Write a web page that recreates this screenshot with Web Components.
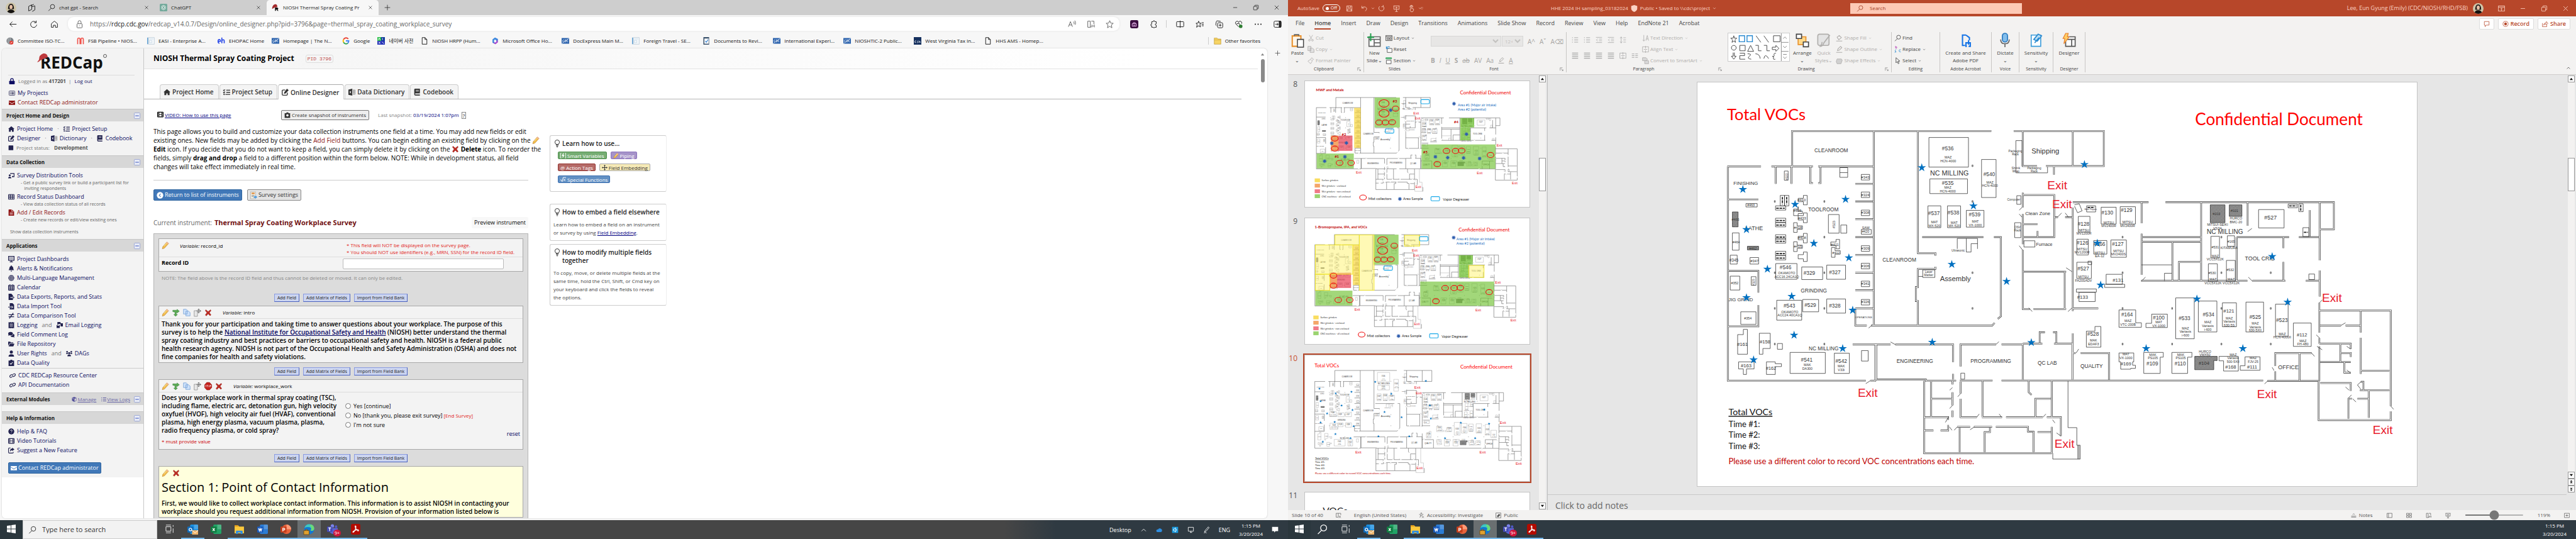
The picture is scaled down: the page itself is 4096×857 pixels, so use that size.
<!DOCTYPE html>
<html lang="en">
<head>
<meta charset="utf-8">
<title>NIOSH Thermal Spray Coating Project</title>
<style>
html,body{margin:0;height:100%}
body{font-family:"Open Sans","Noto Sans","Noto Sans CJK KR",sans-serif;font-size:9px;line-height:12px;color:#222;overflow:hidden}
</style>
</head>
<body>
<dual-desktop></dual-desktop>
<script>
const define=(tag,css,html,ready)=>{
  const t=document.createElement('template');
  customElements.define(tag,class extends HTMLElement{
    constructor(){super();this.attachShadow({mode:'open'});}
    connectedCallback(){
      if(this.shadowRoot.childNodes.length)return;
      t.innerHTML=`<style>*{box-sizing:border-box}:host{display:block;box-sizing:border-box}a{color:inherit;text-decoration:none}button,input,select{font:inherit;color:inherit;margin:0}${css}</style>`+(typeof html==='function'?html(this):html);
      this.shadowRoot.append(t.content.cloneNode(true));
      if(ready)ready(this);
    }
  });
};

/* ---------- icons: 16 x 16 grid, stroke by default ---------- */
const F='fill="currentColor" stroke="none"';
const app=(c,c2,l)=>`<rect x="4" y="1" width="12" height="14" rx="1.5" fill="${c2}" stroke="none"/><rect x="10" y="1" width="6" height="7" fill="#fff" opacity=".2" stroke="none"/><rect x="0" y="4" width="9" height="9" rx="1" fill="${c}" stroke="none"/>${l}`;
const stroke=(d)=>`<path d="${d}" stroke="#fff" stroke-width="1.2" fill="none"/>`;
const pageShape='<path d="M3 1h6l4 4v10H3zM9 1v4h4"/>';
const icons={
 close:'<path d="M3 3l10 10M13 3L3 13"/>',plus:'<path d="M8 1v14M1 8h14"/>',minus:'<path d="M3 8h10"/>',
 restore:'<rect x="2" y="5" width="9" height="9" rx="1"/><path d="M5 5V3q0-1 1-1h7q1 0 1 1v7q0 1-1 1h-2"/>',
 back:'<path d="M15 8H2M7 3L2 8l5 5"/>',refresh:'<path d="M13 5A6 6 0 1 0 14 9M13 1v4H9"/>',home:'<path d="M2 7l6-5 6 5v7h-4v-4H6v4H2z"/>',
 lockline:'<rect x="3" y="7" width="10" height="8" rx="1"/><path d="M5 7V4a3 3 0 0 1 6 0v3M8 10.500v1"/>',
 search:'<circle cx="10" cy="6" r="4.500"/><path d="M7 9.500L1.500 15"/>',
 cards:'<path d="M2 5l6-3v9l-6 3zM6 4l6-3M8 6l6-2v8l-5 3"/>',
 gpt:`<rect width="16" height="16" rx="2" fill="#74aa9c" stroke="none"/><path stroke="#fff" stroke-width="1" d="M8 3l4 2.500v5L8 13l-4-2.500v-5zM8 5.500l2 1.200v2.600L8 10.500 6 9.300V6.700z"/>`,
 redcap:`<path fill="#a32a2c" stroke="none" d="M1 9q1-7 6-8 5-1 5 6l-6 1-5 3z"/><path fill="#111" stroke="none" d="M7 15V8h4q3 0 3 2.200T12 12l2.500 3H12l-2-3H9v3z"/>`,
 az:'<path d="M1 13L5 3l4 10M2.500 9.500h5M11 3q2 2 1 5M13.500 1q2.500 4 1 8"/>',
 book:'<path d="M2 2h5v12H2zM9 2h5v6M7 14l2-1M10 9v5M12.500 10v3M15 9v5"/>',
 star:'<path d="M8 1l2 4.800 5 .4-3.800 3.300L12.400 15 8 12.200 3.600 15l1.200-5.500L1 6.200l5-.4z"/>',
 shopping:'<rect width="16" height="16" rx="3" fill="#3b0e3f" stroke="none"/><path stroke="#e9b8ee" d="M4 7h8v5H4zM6 7V5h4v2M6 10h4"/>',
 puzzle:'<path d="M4 3h3q0-2 1.500-2T10 3h3v4q-2 0-2 1.500T13 10v4h-3q0 1-1.500 1T7 14H4v-3q-2 0-2-1.500T4 8z"/>',
 split:'<rect x="1" y="3" width="14" height="10" rx="1"/><path d="M8 1v14"/>',
 starlist:'<path d="M6 2l1.500 4H11L8.500 8.500l1 5L6 11l-4 3 1.200-5L1 6h3.500zM12 5h4M12 8h4M12 11h4"/>',
 collect:'<rect x="5" y="5" width="10" height="10" rx="2"/><path d="M3 11q-2-1-1.500-3l1-5q.5-2 2.500-1.500l6 1M10 7.500v5M7.500 10h5"/>',
 heart:'<path d="M8 13L2 7q-1-4 3-5 2 0 3 2 1-2 3-2 4 1 3 5M4 7h3l1-2 2 4"/><circle cx="12" cy="12" r="3.500" fill="#2d7d32" stroke="none"/>',
 dots:`<g ${F}><circle cx="2.500" cy="8" r="1.300"/><circle cx="8" cy="8" r="1.300"/><circle cx="13.500" cy="8" r="1.300"/></g>`,
 panel:'<rect x="1" y="2" width="14" height="12" rx="2"/><path d="M3.500 8H9M7 5.500L9.500 8 7 10.500"/><path fill="currentColor" d="M11 2h3v12h-3z"/>',
 iso:'<circle cx="8" cy="8" r="7.500" fill="#7b8085" stroke="none"/><path d="M4 2v12M8 1v14" stroke="#fff" stroke-width=".8"/><circle cx="11" cy="11.500" r="4" fill="#e23b32" stroke="none"/><path d="M9 13l4-3" stroke="#fff"/>',
 pipeline:'<path d="M2 15V5q0-3 2.500-3T7 5v10M9 15V5q0-3 2.500-3T14 5v10" stroke="#f0524b" stroke-width="2.200"/>',
 doc:'<rect x="3" y="1" width="12" height="14" fill="#f4f8fb" stroke="#b7c8d4" stroke-width="1"/><path d="M1 1v14" stroke="#5a9bd0" stroke-width="2"/><path d="M5 4h8M5 7h5v5h-5z" stroke="#bcd" stroke-width=".8"/>',
 eh:'<path d="M1 9h5q0-4-2.500-4T1 9t3 4M9 1v12M9 7q5-3 5 1v5" stroke="#2747e8" stroke-width="2.200"/>',
 cdc:'<rect y="2" width="16" height="12" fill="#2b62ad" stroke="none"/><path stroke="#fff" stroke-width="1" d="M5 6Q2 5 2 8t3 2M7 5.500v5q3 0 3-2.500T7 5.500M14 6q-3-1-3 2t3 2M0 14L16 2" opacity=".85"/>',
 google:'<path d="M13 4A6 6 0 0 0 3 5" stroke="#ea4335" stroke-width="2.600"/><path d="M3 5a6 6 0 0 0 0 6" stroke="#fbbc05" stroke-width="2.600"/><path d="M3 11a6 6 0 0 0 9 2" stroke="#34a853" stroke-width="2.600"/><path d="M12 13q2-2 2-5H8" stroke="#4285f4" stroke-width="2.600"/>',
 naver:'<rect width="8" height="8" fill="#2fc14e" stroke="none"/><rect x="8" width="8" height="8" fill="#123c9c" stroke="none"/><rect y="8" width="16" height="8" fill="#2a36b8" stroke="none"/><path d="M2 6l2-4 2 4M11 6V2M3 10l3 4M6 10l-3 4M10 10l4 4" stroke="#fff"/>',
 page:pageShape,
 office:'<path d="M8 1l6 3v7l-5 4-6-3V5z" fill="#5b5fd0" stroke="none"/><path d="M8 1L3 5v7l3-1V7l4-2 4 2V4z" fill="#3c8fe0" stroke="none"/><path d="M8 5l3 2v3l-3 2-2-2V7z" fill="#f7f7f7" stroke="none"/><path d="M14 7v4l-5 4-3-2 5-3z" fill="#b64bd0" stroke="none"/>',
 check:'<rect x="2" width="12" height="16" fill="#39516b" stroke="none"/><rect x="4" y="3" width="9" height="11" fill="#fff" stroke="none"/><path d="M6 8l2 3 4-6" stroke="#2f7fd0" stroke-width="1.600"/>',
 gsa:'<rect width="16" height="16" fill="#16315f" stroke="none"/><path d="M5 8Q2 7 2 10t3 1M10 8q-3 0-1.500 2T7 12M11 12l1.500-4L14 12" stroke="#fff" stroke-width="1"/>',
 folder:'<path d="M1 2h6l2 2h6v11H1z" fill="#f6d465" stroke="#b58b1c" stroke-width=".8"/><path d="M1 6h14" stroke="#b58b1c" stroke-width=".6"/>',
 lock:`<rect x="1" y="7" width="14" height="9" rx="1.500" ${F}/><path d="M4.500 8V5a3.500 3.500 0 0 1 7 0v3" stroke-width="2"/>`,
 listbox:'<rect x="0.700" y="2.700" width="14.600" height="11" rx="1.500"/><path d="M3 6h2M3 8.300h2M3 10.500h2M6.500 6H13M6.500 8.300H13M6.500 10.500H13" stroke-width="1.400"/>',
 mail:`<path ${F} d="M0 3h16v2L8 10 0 5z"/><path ${F} d="M0 6.500l8 5 8-5V14H0z"/>`,
 house:`<path ${F} d="M8 1L0 8h2v7h4.500v-4h3v4H14V8h2z"/>`,
 tasks:'<path d="M0 3l1.500 1.500L4 2M0 8l1.500 1.500L4 7M7 3.500h9M7 8.300h9M5 13.300h11" stroke-width="2"/><circle cx="2" cy="13" r="1.200" fill="currentColor"/>',
 edit:`<path d="M8 3H3q-2 0-2 2v8q0 2 2 2h8q2 0 2-2V9" stroke-width="2"/><path ${F} d="M12 0l4 3.500L9 11l-4 1 1-4z"/>`,
 excelbw:`<path ${F} d="M0 2l9-2v16l-9-2z"/><path d="M10 3h5.500v10H10M10 6h5M10 9h5M12.500 3v10" stroke="#777" stroke-width="1"/><path d="M3 5.500l3 5M6 5.500l-3 5" stroke="#fff"/>`,
 codebook:`<path ${F} d="M3 0h11v11H4q-1 0-1 1.200T4 13.500h10V16H4q-3 0-3-3V2q0-2 2-2z"/><path d="M4.500 3.500h7M4.500 6h7" stroke="#fff" stroke-width="1"/>`,
 square:`<rect x="1" y="2" width="12" height="12" rx="1" ${F}/>`,
 teach:`<path d="M5 3h10v8h-5" stroke-width="1.800"/><circle cx="4" cy="7.500" r="2.500" ${F}/><path ${F} d="M0 15q0-4 4-4t4 4zM10 9h3v3h-3z"/>`,
 table:'<rect x="1" y="2" width="14" height="12" rx="1" stroke-width="1.800"/><path d="M1 6h14M1 10h14M5.500 2v12M10.500 2v12" stroke-width="1.700"/>',
 file:`<path ${F} d="M1 1q0-1 1-1h7l6 5v10q0 1-1 1H2q-1 0-1-1z"/><path d="M4 8h8M4 10.500h8M4 13h8M9 0v5h5" stroke="#fff" stroke-width="1"/>`,
 dash:'<rect x="1" y="1" width="14" height="10" stroke-width="2"/><path d="M3.500 4.500h9M3.500 7.500h9" stroke-width="1.600" stroke-dasharray="1.600 1"/><path d="M8 11v3M4 15h8" stroke-width="1.800"/>',
 bell:`<path ${F} d="M7 0h2v1.500q4 1 4 5.500 0 3 2 5H1q2-2 2-5 0-4.500 4-5.500zM6 13.500h4q-.5 2-2 2t-2-2z"/>`,
 globe:`<circle cx="8" cy="8" r="7.500" ${F}/><path d="M0 5.500h16M0 10.500h16M8 0v16M5 1q-2 7 0 14M11 1q2 7 0 14" stroke="#f3f3f3" stroke-width=".9"/>`,
 cal:`<rect x="1" y="2.500" width="14" height="12.500" rx="1" stroke-width="1.800"/><path d="M1 5.500h14M1 9h14M1 12h14M5.500 5v10M10.500 5v10M4.500 0v4M11.500 0v4" stroke-width="1.500"/>`,
 fileout:`<path ${F} d="M1 0h7l4 4v4H6v3h6v5H1z"/><path d="M7 9.500h8M12.500 7l2.700 2.500-2.700 2.500" stroke-width="1.500"/>`,
 filein:`<path ${F} d="M4 0h7l4 4v12H4v-4.500h5V14l3.500-4L9 6v2.500H4z"/><path d="M0 10h10" stroke-width="1.700"/>`,
 noteq:'<path d="M1 5.500h14M1 10.500h14M13 1L3 15" stroke-width="2"/>',
 receipt:`<path ${F} d="M1 0l2 1 2-1 3 1 3-1 2 1 2-1v16l-2-1-2 1-3-1-3 1-2-1-2 1z"/><path d="M4 5h8M4 8h8M4 11h8" stroke="#f3f3f3" stroke-width="1.200"/>`,
 mails:`<path ${F} d="M2 0h8v3h6v8h-6V5H4v2H2z"/><path ${F} d="M0 7l4 3 4-3v8H0z"/>`,
 comments:`<ellipse cx="6" cy="5.500" rx="6" ry="4.500" ${F}/><path ${F} d="M1 8l-1 3 4-2zM12.500 6q4 1 3.500 4.500-.3 1.500-1 2.300l1 2.700-3.500-1.500Q8 15 6 11.500 12 11 12.500 6z"/>`,
 folderopen:`<path ${F} d="M0 2h5l2 2h6v2H4l-4 6zM4.500 7H16l-3 7H1z"/>`,
 user:`<circle cx="8" cy="4.200" r="4" ${F}/><path ${F} d="M1 16q0-6 7-6t7 6z"/>`,
 users:`<circle cx="8" cy="7" r="2.600" ${F}/><circle cx="2.700" cy="3.500" r="2" ${F}/><circle cx="13.300" cy="3.500" r="2" ${F}/><path ${F} d="M3.500 15q0-4.500 4.500-4.500t4.500 4.500zM0 9q0-3 3-3l1.500.5V9zM16 9q0-3-3-3l-1.500.5V9z"/>`,
 clipcheck:`<path ${F} d="M1 2h4q0-2 3-2t3 2h4v14H1z"/><path d="M4.500 9l2.500 2.500L11.500 6" stroke="#f3f3f3" stroke-width="1.800"/>`,
 link:'<path d="M7 11.500q-4 3-6 0-1-3 3-5 4-2 5 1.500M9 5q4-3 6 0 1 3-3 5-4 2-5-1.500" stroke-width="1.700"/>',
 cube:`<path ${F} d="M8 0l7 3v9l-7 4-7-4V3z"/><path d="M2 4l6 3 6-3" stroke="#d7d7d7"/><path d="M9 8v6l5-3V5z" fill="#d7d7d7" stroke="none"/>`,
 list:'<path d="M0 3h2M0 8h2M0 13h2M5 3h11M5 8h11M5 13h11" stroke-width="1.700"/>',
 help:`<circle cx="8" cy="8" r="7.500" ${F}/><path d="M5.800 6q.2-2 2.200-2t2.200 1.800Q10.200 7.500 8 8.500M8 10.800V12" stroke="#f3f3f3" stroke-width="1.600"/>`,
 film:'<rect x="1" y="2" width="14" height="12" rx="1" stroke-width="2"/><path d="M4.500 2v12M11.500 2v12M4.500 8h7M1 6h3M1 10h3M12 6h3M12 10h3" stroke-width="1.500"/>',
 share:`<path d="M6 2H3Q1 2 1 4v9q0 2 2 2h8q2 0 2-2v-1" stroke-width="1.800"/><path ${F} d="M10 1l6 4.500-6 4.500V7.500q-4 0-5 4-1-8 5-8z"/>`,
 camera:`<path ${F} d="M1 3h4l1-2h4l1 2h4v12H1z"/><circle cx="8" cy="8.500" r="3" fill="#eee" stroke="none"/>`,
 pencil:'<path d="M11 1l4 3L6 14l-4.500 1.500L2.500 11z" fill="#f2bf4f" stroke="#bd7b22" stroke-width=".8"/><path d="M11 1l4 3-1.500 1.600-4-3z" fill="#f0b3a0" stroke="none"/><path d="M5 9.500l6-6.500" stroke="#fce9a4" stroke-width="1.300"/>',
 del:'<path d="M3 2l5 4 5-4 1 2-3.500 4 3.500 5-2 1.500L8 10.500 4 15l-2-2 3.500-5L2 4z" fill="#bf2c24" stroke="#8e1c16" stroke-width=".7"/>',
 branch:'<path d="M1 3h9V1l5 4-5 4V6.500L8.500 8v4H11l-4 4-4-4h2.500V7L1 6z" fill="#5aaa53" stroke="#35803a" stroke-width=".7"/>',
 copy:'<path d="M1 1h6l2 2v8H1zM6 5h6l3 3v7H6z" fill="#cfe2fa" stroke="#6d9bd4" stroke-width="1"/>',
 move:'<path d="M1 4h7v12H1z" fill="#e8e8e8" stroke="#999"/><path d="M10.500 0v9M6 4.500h9M10.500 0l-2 2M10.500 0l2 2M15 4.500l-2-2M15 4.500l-2 2M10.500 9l-2-2M10.500 9l2-2" stroke="#555" stroke-width="1.100"/>',
 stop:'<path d="M5 0h6l4.500 5v6L11 16H5L.5 11V5z" fill="#c4211c" stroke="#7e1512" stroke-width=".7"/><path d="M4 6q-2 0-1 1.500T2.500 10M5 6h2.500M6.200 6v4M9.500 6v4M12 10V6h1.500v2H12" stroke="#fff" stroke-width=".9"/>',
 circleleft:`<circle cx="8" cy="8" r="7.500" ${F}/><path d="M9.500 4.500L6 8l3.500 3.500" stroke="#4178b8" stroke-width="1.500"/>`,
 survey:'<rect x="1" width="11" height="16" fill="#f4efe2" stroke="#999" stroke-width=".8"/><rect x="3" y="2" width="7" height="3" fill="#e0862f" stroke="none"/><path d="M3 8h7M3 11h5" stroke="#777"/><path d="M8 10h4V8l4 4-4 4v-2H8z" fill="#4f9be0" stroke="none"/>',
 bulb:'<circle cx="8" cy="5.500" r="4.800"/><path d="M6 10v2h4v-2M6 14h4M7 16h2"/>',
 bolt:`<path ${F} d="M8 1L4 9h3l-1 6 6-9H8l2-5z"/><path d="M2.500 1H.8v14h1.700M13.500 1h1.700v14h-1.700" stroke-width="1.500"/>`,
 arrows:'<path d="M8 1v14M1 8h14M8 1L6 3M8 1l2 2M8 15l-2-2M8 15l2-2M1 8l2-2M1 8l2 2M15 8l-2-2M15 8l-2 2" stroke-width="1.700"/>',
 root:'<path d="M0 9h2.500L5 14 8 2h8M9 6l5 6M14 6l-5 6" stroke-width="1.700"/>',
 minusbox:'<rect x="0.700" y="0.700" width="14.600" height="14.600" rx="2" fill="#e9ecf6" stroke="#92a0d4" stroke-width="1.400"/><path d="M3.500 8h9" stroke="#5c72c8" stroke-width="2"/>',
 save:'<path d="M2 2h12v12H2zM5 2v4h6V2M4 14V9h8v5"/>',undo:'<path d="M2 2v5h5M2 7q4-5 9-2t-1 9"/>',redo:'<path d="M12 3a6 6 0 1 1-8 0M12 0v4h-4"/>',
 present:'<path d="M1 2h14M2 2v8h12V2M8 10v5M5 15h6M7 4.500l3 1.700-3 1.700z"/>',touch:'<path d="M6 10V3q0-1.500 1.300-1.500T8.600 3v5l4 1v3l-2 3.500H6.500L4 11zM4 5q0-4 3.500-4.500T11 5"/>',
 caret:'<path d="M3 6l5 5 5-5" stroke-width="1.800"/>',qat:'<path d="M3 5h10M4 9l4 4 4-4"/>',
 shield:`<path ${F} d="M8 0l7 2v6q0 5-7 8-7-3-7-8V2z"/>`,
 ribbonup:'<rect x="1" y="2" width="14" height="12"/><path d="M1 5h14M8 13V7.500M5.500 9.500L8 7l2.500 2.500"/>',
 chat:'<path d="M2 2h12v9H7l-3 4v-4H2z"/>',rec:`<circle cx="8" cy="8" r="6.500"/><circle cx="8" cy="8" r="3.500" ${F}/>`,shareout:'<path d="M1 6v9h11v-4M4 11q1-6 7-6V2l4 4.500-4 4V8Q7 8 4 11z"/>',
 paste:'<path d="M2 3h10v12H2z" fill="#fff7ea" stroke="#e8912d" stroke-width="1.500"/><path d="M4.500 3V1.500h5V3" stroke="#666"/><path d="M8 7h7v9H8z" fill="#fff" stroke="#444" stroke-width="1.100"/>',
 cut:'<path d="M4 1l6 10M12 1L6 11"/><circle cx="4.500" cy="13" r="2"/><circle cx="11.500" cy="13" r="2"/>',
 copyg:'<path d="M1 1h7v10H1zM6 5h5l4 3v7H6z" fill="#e2e2e2"/>',brush:'<path d="M10 1l4 4-4 3-3-3zM7 5L1 9l6 6 4-6"/>',
 newslide:'<path d="M2 4h13v11H2zM2 7h13M8 7v8M8 11h7" stroke="#666" fill="#fff"/><path d="M4 0v9M0 4.500h8" stroke="#1f9e4a" stroke-width="1.400"/>',
 layout:'<rect x="1" y="2" width="14" height="12"/><path d="M1 5h14M4 7.500h3.500v4H4zM9.500 7.500H13v4H9.500z"/>',
 reset:'<path d="M4 6h11v9H4z" fill="#fff"/><path d="M2 1v5h5M2 5q4-5 8-2" stroke="#2a8ad0" stroke-width="1.500"/>',
 section:'<path d="M2 7h11v8H2z" fill="#fff"/><path d="M1 1h13v3H1z" fill="#6cc48a" stroke="#2f9e58"/>',
 lines:'<path d="M1 2h14M1 6h14M1 10h14M1 14h14" stroke-width="1.500"/>',bullets:'<path d="M1 3h2M1 8h2M1 13h2M6 3h9M6 8h9M6 13h9" stroke-width="1.500"/>',
 indent:'<path d="M1 2h14M8 6h7M8 10h7M1 14h14M5 5L2 8l3 3"/>',spacing:'<path d="M4 1v14M1.500 4L4 1l2.500 3M1.500 12L4 15l2.500-3M9 3h6M9 8h6M9 13h6"/>',
 cols:'<path d="M1 4h6M1 8h6M1 12h6M9 4h6M9 8h6M9 12h6" stroke-width="1.500"/>',
 textdir:'<path d="M4 1v14M1.500 12L4 15l2.500-3M9 14l3-12 3 12M10 10h4"/>',align:'<path d="M1 2h14v12H1zM8 0v6M8 16v-6M4 8h8"/>',smart:'<path d="M1 1h8l4 4-4 3H1zM6 8h9v7H6z" fill="#d8d8d8"/>',
 arrange:'<path d="M3 4h9v9H3z" fill="#ffd98a" stroke="#e8912d"/><path d="M1 1h6v5H1zM9 10h6v5.500H9z" fill="#fff" stroke="#444"/>',
 quick:'<rect x="1" y="1" width="13" height="13" rx="2" fill="#e4e4e4"/><path d="M15 2L8 11q-1 4-4 4 2-2 2-5"/>',
 bucket:'<path d="M3 6l5-4 5 5-6 5zM1 15h14" stroke-width="1.600"/>',pen:'<path d="M4 11l1-4 6-6 3 3-6 6zM1 15h14" stroke-width="1.600"/>',fx:'<path d="M3 4h10l2 3-3 8H3L1 10z" fill="#d0d0d0"/>',
 replace:'<path d="M3 5V0M3 3q4-2 3 1t-3 1" stroke="#b43fb4"/><path d="M15 9q-4-1-4 2t4 3M4 8q-4 3 0 6M2 12l2 2-3 1" stroke="#2a8ad0"/>',cursor:'<path d="M4 1v12l3-3 2 5 2-1-2-5h4z"/>',
 adobe:'<path d="M8 2H4v12h3M8 2l4 3v3" stroke="#1473e6" stroke-width="1.500"/><path d="M9 15h-1v-4h5v4h-2M11 8v5" stroke="#1473e6" stroke-width="1.500"/>',
 mic:'<rect x="5" width="6" height="10" rx="3" fill="#83beec" stroke="#2a7ac0"/><path d="M3 7q0 5 5 5t5-5M8 12v4" stroke="#666"/>',
 sens:'<path d="M2 2h11v13H2z" fill="#fff" stroke="#3d9ddb"/><path d="M5 7l5-6 4 2-5 6zM6 11l5-6" fill="#b9def5" stroke="#2a8ad0"/>',
 designer:'<path d="M4 4h11v11H4zM4 7h11M11 7v8" fill="#fff" stroke="#555"/><path d="M4 0h3L6 4h2L2 12l1-6H1z" fill="#ffcf66" stroke="#e8812d" stroke-width=".9"/>',
 launcher:'<path d="M2 14V2h10M6 6l8 8M14 9v5H9"/>',
 taskview:'<path d="M1 4h9v8H1zM1 1h9M1 15h9M14 1v3M14 7v8" stroke-width="1"/>',
 start:`<path ${F} d="M0 2.300l7-.9v6.100H0zM8 1.200L16 0v7.500H8zM0 8.500h7v6.100l-7-.9zM8 8.500h8V16l-8-1.200z"/>`,
 outlook:app('#0f6cbd','#1a8fe0',`<circle cx="4.500" cy="8.500" r="2" stroke="#fff" stroke-width="1.200"/><path d="M7 9.500h9V16H7z" fill="#efb56c" stroke="none"/><path d="M7 9.500l4.500 4L16 9.500" stroke="#fff" stroke-width=".9"/>`),
 excel:app('#107c41','#21a366',stroke('M3 6.500l3 4M6 6.500l-3 4')),
 explorer:'<path d="M1 2h5l2 2h7v10H1z" fill="#fbc93d" stroke="none"/><path d="M1 2h5l1 2H1z" fill="#e39a17" stroke="none"/><path d="M3 15v-4q0-1 1-1h8q1 0 1 1v4h-3v-2H6v2z" fill="#2f8ee0" stroke="none"/>',
 word:app('#185abd','#2b7cd3',stroke('M2 6.500l1.300 4L4.500 7l1.200 3.500L7 6.500')),
 ppt:'<circle cx="9" cy="8" r="7" fill="#e8633c" stroke="none"/><path d="M9 1a7 7 0 0 1 7 7H9z" fill="#ff9b77" stroke="none"/><rect y="4" width="9" height="9" rx="1" fill="#c43e1c" stroke="none"/>'+stroke('M3.500 11V6.500h1.500q1.500 0 1.500 1.200T5 9H3.500'),
 edge:'<circle cx="8" cy="8" r="7.500" fill="#1478cf" stroke="none"/><path d="M1 6Q3 0 9 .5 16 1 15.500 8q-1 3-5 2 2-4-2-5T1 6z" fill="#3fc8c0" stroke="none"/><path d="M10 .7Q16 2 15.500 8q-1 3-5 2 2-5-1-7z" fill="#6bdc76" stroke="none"/><path d="M0 10h8v6H0zM2.500 10V8.500h3V10" fill="#e0a132" stroke="#6e4a10" stroke-width=".8"/>',
 teams:'<circle cx="8" cy="3" r="2.500" fill="#7b83eb" stroke="none"/><circle cx="13.500" cy="4" r="1.800" fill="#5059c9" stroke="none"/><path d="M4 6h12v5q-2 4-6 4T4 12z" fill="#5b62d0" stroke="none"/><rect y="4" width="8" height="8" rx="1" fill="#444bb5" stroke="none"/>'+stroke('M2 6h4M4 6v4.500'),
 acrobat:'<rect x="1" width="14" height="16" rx="2.500" fill="#b30b00" stroke="none"/><path d="M7.500 3q2 0 0 5T4 12.500q-1-1 3.500-3T12.500 10q-1 1.500-3.500-2T7.500 3z" stroke="#fff" stroke-width="1.100"/>',
 up:'<path d="M3 11l5-5 5 5"/>',cloud:'<path d="M3 13Q0 12 1 9t4-2q2-4 6-2t3 5q0 3-3 3z" fill="#2f8ee0" stroke="none"/>',vol:'<rect x="1" y="1" width="14" height="14" fill="#1a9be0" stroke="none"/><path d="M4 6h2l3-3v10L6 10H4zM11 6q1 2 0 4" stroke="#fff"/>',
 monitor:'<path d="M2 2h12v9H2zM6 14h5M8 11v3"/>',penw:'<path d="M12 1L5 9l-2 4 4-2 7-8zM2 15q3-2 6 0"/>',
 notify:`<path ${F} d="M1 1h14v10H9l-3 3v-3H1z"/>`,
 tri:`<path ${F} d="M8 4l6 8H2z"/>`,trid:`<path ${F} d="M8 12L2 4h12z"/>`,
 spell:'<path d="M1 2h6v11H1zM7 2h7v5M9 9l5 6M14 9l-5 6"/>',access:'<circle cx="7" cy="2.500" r="1.700"/><path d="M1 5l4 1v3l-2 5M13 5L9 6v3M5 9h3M9 10l5 5M14 10l-5 5"/>',label:'<path d="M1 1h14v14H1z"/><path d="M4 10l6-6 3 3-6 6z" fill="currentColor"/>',
 notes:'<path d="M1 10h14M1 13h14M5 6l3-3 3 3"/>',normal:'<path d="M1 2h14v12H1zM5 2v12"/>',sorter:'<path d="M1 2h6v5H1zM9 2h6v5H9zM1 9h6v5H1zM9 9h6v5H9z"/>',fit:'<path d="M1 2h14v12H1zM4 8h8M8 5v6"/>',
 prev:`<path ${F} d="M8 1l5 5H3zM8 7l5 5H3z"/>`,next:`<path ${F} d="M8 15l5-5H3zM8 9l5-5H3z"/>`
};
define('ui-icon',':host{display:inline-block;flex:none;width:var(--size,10px);height:var(--size,10px)}svg{display:block;width:100%;height:100%;overflow:visible}',
 el=>`<svg viewBox="0 0 16 16" fill="none" stroke="currentColor" stroke-width="1.200" aria-hidden="true">${icons[el.getAttribute('name')]||''}</svg>`);
const I=(n,c='')=>`<ui-icon name="${n}" class="${c}"></ui-icon>`;

define('user-photo',':host{width:17px;height:17px;flex:none}svg{display:block}','<svg viewBox="0 0 18 18" width="17" height="17"><defs><clipPath id="c"><circle cx="9" cy="9" r="9"/></clipPath></defs><g clip-path="url(#c)"><rect width="18" height="18" fill="#cfc5a8"/><path d="M4 11Q4 2 9 2t5 9z" fill="#1d1716"/><ellipse cx="9" cy="7.500" rx="2.600" ry="3.400" fill="#e7bfa4"/><path d="M2 18q1-6 7-6t7 6z" fill="#14110f"/></g></svg>');

/* ---------- Edge ---------- */
define('browser-tabs',`:host{display:flex;height:24px;align-items:stretch;background:#cecece;color:#222;font-size:8px}
.lead{width:68px;display:flex;align-items:center;gap:18px;padding-left:9px;--size:13px}
.tab{display:flex;align-items:center;gap:6px;width:178px;padding:0 8px;position:relative;--size:12px;white-space:nowrap;border-right:1px solid transparent}
.tab:nth-child(2){border-color:#777;width:176px}.tab span{flex:1;overflow:hidden}
.tab .x{--size:8px;color:#222}.active{background:#f7f7f7;border-radius:5px 5px 0 0}
.new{margin-left:9px}.ctl{margin-left:auto;display:flex;gap:23px;padding-right:13px}button{border:0;background:none;padding:0;display:flex;align-items:center;--size:10px}`,
`<div class="lead"><user-photo></user-photo>${I('cards')}</div>
<div class="tab">${I('search')}<span>chat gpt - Search</span>${I('close','x')}</div>
<div class="tab">${I('gpt')}<span>ChatGPT</span>${I('close','x')}</div>
<div class="tab active">${I('redcap')}<span>NIOSH Thermal Spray Coating Pr</span>${I('close','x')}</div>
<button class="new" aria-label="New tab">${I('plus')}</button>
<div class="ctl"><button aria-label="Minimize">${I('minus')}</button><button aria-label="Restore">${I('restore')}</button><button aria-label="Close">${I('close')}</button></div>`);

define('browser-toolbar',`:host{display:flex;align-items:center;height:28px;background:#f7f7f7;--size:13px;color:#222;padding-left:14px}
button{border:0;background:none;padding:0;display:flex}
.nav{display:flex;gap:20px;width:94px}
.url{flex:1;display:flex;align-items:center;height:22px;background:#fff;border-radius:9px;padding:0 9px 0 12px;gap:10px;box-shadow:0 0 3px #ddd;color:#666}
.url p{margin:0;flex:1;font-size:10px;white-space:nowrap}.url b{font-weight:400;color:#111}.url .g{display:flex;gap:17px}
.ext{display:flex;gap:18px;padding:0 10px 0 17px;align-items:center}.ext i{width:1px;height:12px;background:#ccc;margin:0 -3px 0 -5px}`,
`<div class="nav"><button aria-label="Back">${I('back')}</button><button aria-label="Refresh">${I('refresh')}</button><button aria-label="Home">${I('home')}</button></div>
<div class="url">${I('lockline')}<p>https://<b>rdcp.cdc.gov</b>/redcap_v14.0.7/Design/online_designer.php?pid=3796&amp;page=thermal_spray_coating_workplace_survey</p><div class="g">${I('az')}${I('book')}${I('star')}</div></div>
<div class="ext">${I('shopping')}${I('puzzle')}<i></i>${I('split')}${I('starlist')}${I('collect')}${I('heart')}${I('dots')}${I('panel')}</div>`);

const favs=[['iso','Committee ISO-TC...'],['pipeline','FSB Pipeline • NIOS...'],['doc','EASI - Enterprise A...'],['eh','EHOPAC Home',1],['cdc','Homepage | The N...'],['google','Google',1],['naver','네이버 사전',1],['page','NIOSH HRPP (Hum...'],['office','Microsoft Office Ho...'],['cdc','DocExpress Main M...'],['doc','Foreign Travel - SE...'],['check','Documents to Revi...'],['cdc','International Experi...'],['cdc','NIOSHTIC-2 Public...'],['gsa','West Virginia Tax In...'],['page','HHS AMS - Homep...']];
define('favorites-bar',`:host{display:flex;align-items:center;height:25px;background:#f7f7f7;font-size:8px;padding:0 10px;gap:12px;color:#111;--size:12px}
a{display:flex;align-items:center;gap:6px;width:100px;white-space:nowrap}.s{width:auto}.o{margin-left:auto;width:auto;border-left:1px solid #ccc;padding:0 34px 0 8px}`,
 favs.map(f=>`<a href="#"${f[2]?' class="s"':''}>${I(f[0])}${f[1]}</a>`).join('')+`<a href="#" class="o">${I('folder')}Other favorites</a>`);

/* ---------- REDCap left menu ---------- */
define('menu-section',`h2{margin:0;display:flex;align-items:center;height:20px;padding:0 5px 0 7px;background:#d7d7d7;border-top:1px solid #c6c6c6;font-size:8px;font-weight:700;color:#111}
h2 span{flex:1}button{border:0;background:none;padding:0;display:flex;--size:10px}div{padding:4px 0 0 10px}`,
 el=>`<h2><span>${el.getAttribute('label')}</span><slot name="tools"></slot><button aria-label="Collapse">${I('minusbox')}</button></h2><div><slot></slot></div>`);

const row=(...p)=>`<p>${p.join('')}</p>`,lk=(i,t,c='')=>`<a href="#" class="${c}">${i?I(i):''}${t}</a>`;
define('redcap-menu',`:host{width:226px;flex:none;background:#f3f3f3;border-right:1px solid #c8c8c8;color:#0b0b62;font-size:9px;--size:10px}
p{margin:0;height:15px;display:flex;align-items:center;gap:7px;white-space:nowrap}a{display:flex;align-items:center;gap:4px}a ui-icon{color:#22224e}
.logo{height:43px;margin:0 14px 0 10px;border-bottom:1px solid #ddd;display:flex;justify-content:center;align-items:center;padding-top:3px}
.red,.red ui-icon{color:#8f1313}.g{color:#777}.who{font-size:8px;margin:1px 0 4px;gap:5px}.who b,.st b{color:#555}.top{padding:0 0 3px 11px}
.st{font-size:8px;color:#777;margin-bottom:5px;gap:3px}.st ui-icon{color:#22224e}
small{display:block;font-size:7px;line-height:9px;color:#666;padding-left:20px;margin-bottom:1px}small+p{margin-top:1px}.show{font-size:7px;color:#666;margin:7px 0 4px 3px}
.app{padding-bottom:1px}.res{border-top:1px solid #ccc;margin-left:-10px;padding:3px 0 5px 12px}
.tools{display:flex;gap:8px;color:#6d6aa8;font-weight:400;font-size:8px;margin-right:6px;--size:8px}.tools a{gap:1px;text-decoration:underline}.tools ui-icon{color:#54519a}
.btn{display:flex;gap:2px;align-items:center;background:#4178b8;border:1px solid #30659f;border-radius:2px;color:#fff;height:18px;padding:0 3px;margin:12px 0 6px;font-size:9px}
.gap{height:6px}.blank{background:#fff;height:100px}`,
`<div class="logo"><svg viewBox="0 0 112 32" width="112" height="32" role="img" aria-label="REDCap"><text x="6" y="25" font-family="Open Sans" font-weight="700" font-size="26" fill="#111">REDCap</text><path d="M1 15l3-4q0-8 7-10 6-1 7 6l-3 1-9 4q-2 3-5 3z" fill="#be3a3e"/><circle cx="109" cy="5" r="2.500" fill="none" stroke="#555"/></svg></div>
<div class="top"><p class="who">${I('lock')}<span class="g">Logged in as <b>417201</b> &nbsp;|</span><a href="#">Log out</a></p>
${row(lk('listbox','My Projects'))}${row(lk('mail','Contact REDCap administrator','red'))}</div>
<menu-section label="Project Home and Design">${row(lk('house','Project Home'),'<span class="g">·</span>',lk('tasks','Project Setup'))}
${row(lk('edit','Designer'),'<span class="g">·</span>',lk('excelbw','Dictionary'),'<span class="g">·</span>',lk('codebook','Codebook'))}
<p class="st">${I('square')}Project status: &nbsp;<b>Development</b></p></menu-section>
<menu-section label="Data Collection">${row(lk('teach','Survey Distribution Tools'))}<small>- Get a public survey link or build a participant list for<br>&nbsp; &nbsp;inviting respondents</small>
${row(lk('table','Record Status Dashboard'))}<small>- View data collection status of all records</small>${row(lk('file','Add / Edit Records','red'))}<small>- Create new records or edit/view existing ones</small><p class="show">Show data collection instruments</p></menu-section>
<menu-section label="Applications"><div class="app">${row(lk('dash','Project Dashboards'))}${row(lk('bell','Alerts &amp; Notifications'))}${row(lk('globe','Multi-Language Management'))}${row(lk('cal','Calendar'))}${row(lk('fileout','Data Exports, Reports, and Stats'))}${row(lk('filein','Data Import Tool'))}${row(lk('noteq','Data Comparison Tool'))}${row(lk('receipt','Logging'),'<span class="g">and</span>',lk('mails','Email Logging'))}${row(lk('comments','Field Comment Log'))}${row(lk('folderopen','File Repository'))}${row(lk('user','User Rights'),'<span class="g">and</span>',lk('users','DAGs'))}${row(lk('clipcheck','Data Quality'))}</div>
<div class="res">${row(lk('link','CDC REDCap Resource Center'))}${row(lk('link','API Documentation'))}</div></menu-section>
<menu-section label="External Modules"><span slot="tools" class="tools">${lk('cube','Manage')}${lk('list','View Logs')}</span></menu-section><div class="gap"></div>
<menu-section label="Help &amp; Information">${row(lk('help','Help &amp; FAQ'))}${row(lk('film','Video Tutorials'))}${row(lk('share','Suggest a New Feature'))}<button class="btn">${I('mail')}Contact REDCap administrator</button></menu-section><div class="blank"></div>`);

/* ---------- REDCap designer ---------- */
define('field-card',`:host{display:block;margin:0 7px;background:#f3f3f3;border:1px solid #a9a9a9;line-height:13px;font-size:10px;color:#000}
header{display:flex;align-items:center;height:20px;border-bottom:1px solid #ddd;padding:0 4px;gap:5px;--size:12px;font-size:8px}header span{margin-left:12px}
:host([tall]) header{height:29px;align-items:flex-start;padding-top:4px}:host([section]){background:#ffffdd}:host([section]) header{border:0}.b{padding:2px 4px}:host([section]) .b{padding-top:0}em{font-style:italic}`,
 el=>`<header>${(el.getAttribute('tools')||'').split(' ').map(t=>I(t)).join('')}${el.getAttribute('var')?`<span><em>Variable:</em> ${el.getAttribute('var')}</span>`:''}<slot name="note"></slot></header><div class="b"><slot></slot></div>`);
define('add-bar',`:host{display:flex;justify-content:center;gap:6px;padding:7px 0 6px;font-size:7px}button{height:13px;padding:0 4px;line-height:9px;background:#ccd5f0;border:1px solid #8a9be0;border-right-color:#4a62c0;border-bottom-color:#4a62c0;color:#222;white-space:nowrap}`,
 '<button>Add Field</button><button>Add Matrix of Fields</button><button>Import from Field Bank</button>');
define('tip-card',`:host{border:1px solid #ccc;border-right-color:#eee;border-radius:3px;padding:6px 2px 6px 5px;width:186px;font-size:8px;line-height:13px;color:#444;background:#fff}
h3{margin:0 0 6px;font-size:10px;line-height:13px;font-weight:600;color:#222;display:flex;gap:2px;align-items:flex-start;--size:12px}div{padding-right:4px}`,
 el=>`<h3>${I('bulb')}<span>${el.getAttribute('label')}</span></h3><div><slot></slot></div>`);

define('redcap-page',`:host{flex:1;min-width:0;background:#fff;color:#000}
.hd{height:33px;display:flex;align-items:center;gap:18px;padding-left:15px;background:linear-gradient(90deg,#f4f4f4,#fff 90%);border-bottom:1px solid #e2e2e2}
h1{margin:0;font-size:12px;font-weight:700}.pid{font:8px "Liberation Mono",monospace;color:#c0504d;border:1px solid #ddd;border-radius:3px;padding:1px 2px;line-height:9px}
.tabs{display:flex;gap:1px;padding:24px 0 0 25px;height:48px;border-bottom:1px solid #b5b5b5;margin-right:26px;font-size:10px;font-weight:600;color:#333;--size:11px}
.tabs a{display:flex;align-items:center;gap:3px;border:1px solid #ccc;border-bottom:0;border-radius:4px 4px 0 0;background:#f4f4f4;padding:0 7px 0 5px;white-space:nowrap}.tabs .on{background:#fff;margin-bottom:-1px;border-top-color:#aaa}
.cols{display:flex;gap:34px;padding-left:15px}.main{width:596px;flex:none}
.vid{display:flex;align-items:center;margin-top:17px;font-size:8px;--size:10px;padding-left:6px}.vid .v{display:flex;gap:2px;width:197px;color:#000080;text-decoration:underline}.vid .v ui-icon{color:#000}
button{white-space:nowrap;display:flex;align-items:center;gap:2px}
.snap{height:16px;border:1px solid #777;border-radius:2px;background:#eee;color:#333;padding:0 4px}.last{margin:0 4px 0 14px;color:#888}.last b{font-weight:400;color:#000080}.q{border:1px solid #888;font-size:8px;line-height:9px;padding:0 1px}
.intro{margin:11px 0 14px;font-size:10px;line-height:14px;--size:12px;white-space:nowrap}.intro ui-icon{vertical-align:-2px}.mar{color:#8b1a1a}
hr{border:0;border-top:1px solid #ccc;margin:0 0 14px}.acts{display:flex;gap:8px;--size:11px;font-size:9px}.acts button{height:18px;border-radius:2px;padding:0 4px;border:1px solid #888;background:#e3e3e3;color:#333}.acts .p{background:#4178b8;border-color:#30659f;color:#fff}
.cur{display:flex;align-items:center;margin:26px 0 8px;font-size:10px;color:#666;gap:4px;height:18px}.cur b{font-size:11px;font-weight:700;color:#701010;flex:1}.cur button{border:0;background:#f8f8f8;border-radius:2px;height:18px;font-size:9px;color:#000;padding:0 4px}
.form{background:#dcdcdc;border:1px solid #b5b5b5;padding-top:7px;height:900px}
.warn{margin-left:auto;width:276px;color:#e2231a;font-size:8px;line-height:11px}.rec{display:flex;justify-content:space-between;height:18px;font-size:9px;font-weight:700;padding-right:26px}.rec input{width:256px;height:17px;border:1px solid #bbb;border-radius:2px;background:#fff}
.note{margin:4px 0 12px 12px;font-size:8px;color:#888}.nw{white-space:nowrap;font-weight:600}.nw a{color:#000060;text-decoration:underline}
.two{display:flex;height:86px}.two .q1{width:292px;flex:none}.must{font-size:8px;color:#c00;font-weight:400;margin-top:4px}
.opt{flex:1;font-size:9px;padding-top:12px}.opt label{display:flex;align-items:center;gap:4px;height:15px}.opt input{appearance:none;width:9px;height:9px;border:1px solid #777;border-radius:50%;background:#fff}.opt small{font-size:8px;color:#e2231a;margin-left:-2px}.opt a{display:block;text-align:right;color:#000060}
h2{font-size:20px;line-height:25px;font-weight:400;margin:0 0 7px;white-space:nowrap}
aside{display:flex;flex-direction:column;gap:5px;padding-top:57px}aside .t1{min-height:88px;margin-bottom:14px}
.bd{display:flex;gap:6px;margin:0 0 7px 7px;font-size:8px;--size:9px}.bd span{display:flex;align-items:center;gap:2px;height:12px;border-radius:2px;padding:0 3px;color:#fff;border:1px solid;white-space:nowrap}
.g{background:#76ad74;border-color:#4d8f4c!important}.v1{background:#a593c9;border-color:#8c72bd!important}.r{background:#b56b68;border-color:#93302c!important}.y{background:#f5e9b6;border-color:#aaa!important;color:#333!important}.bl{background:#6290c4;border-color:#3a6fb0!important}u{color:#000080;white-space:nowrap}`,
`<div class="hd"><h1>NIOSH Thermal Spray Coating Project</h1><span class="pid">PID 3796</span></div>
<nav class="tabs"><a href="#">${I('house')}Project Home</a><a href="#">${I('tasks')}Project Setup</a><a href="#" class="on">${I('edit')}Online Designer</a><a href="#">${I('excelbw')}Data Dictionary</a><a href="#">${I('codebook')}Codebook</a></nav>
<div class="cols"><div class="main">
<div class="vid"><a class="v" href="#">${I('film')}VIDEO: How to use this page</a><button class="snap">${I('camera')}Create snapshot of instruments</button><span class="last">Last snapshot: <b>03/19/2024 1:07pm</b></span><span class="q">?</span></div>
<p class="intro">This page allows you to build and customize your data collection instruments one field at a time. You may add new fields or edit<br>existing ones. New fields may be added by clicking the <span class="mar">Add Field</span> buttons. You can begin editing an existing field by clicking on the ${I('pencil')}<br><b>Edit</b> icon. If you decide that you do not want to keep a field, you can simply delete it by clicking on the ${I('del')} <b>Delete</b> icon. To reorder the<br>fields, simply <b>drag and drop</b> a field to a different position within the form below. NOTE: While in development status, all field<br>changes will take effect immediately in real time.</p>
<hr><div class="acts"><button class="p">${I('circleleft')}Return to list of instruments</button><button>${I('survey')}Survey settings</button></div>
<div class="cur"><span>Current instrument:</span><b>Thermal Spray Coating Workplace Survey</b><button>Preview instrument</button></div>
<div class="form">
<field-card tall tools="pencil" var="record_id"><div slot="note" class="warn">* This field will NOT be displayed on the survey page.<br>* You should NOT use identifiers (e.g., MRN, SSN) for the record ID field.</div><div class="rec"><label for="rid">Record ID</label><input id="rid" type="text"></div></field-card>
<p class="note">NOTE: The field above is the record ID field and thus cannot be deleted or moved. It can only be edited.</p>
<add-bar></add-bar>
<field-card tools="pencil branch copy move del" var="intro"><div class="nw">Thank you for your participation and taking time to answer questions about your workplace. The purpose of this<br>survey is to help the <a href="#">National Institute for Occupational Safety and Health</a> (NIOSH) better understand the thermal<br>spray coating industry and best practices or barriers to occupational safety and health. NIOSH is a federal public<br>health research agency. NIOSH is not part of the Occupational Health and Safety Administration (OSHA) and does not<br>fine companies for health and safety violations.</div></field-card>
<add-bar></add-bar>
<field-card tools="pencil branch copy move stop del" var="workplace_work"><div class="two"><div class="q1"><div class="nw">Does your workplace work in thermal spray coating (TSC),<br>including flame, electric arc, detonation gun, high velocity<br>oxyfuel (HVOF), high velocity air fuel (HVAF), conventional<br>plasma, high energy plasma, vacuum plasma, plasma,<br>radio frequency plasma, or cold spray?</div><div class="must">* must provide value</div></div>
<div class="opt"><label><input type="radio" name="w">Yes [continue]</label><label><input type="radio" name="w">No [thank you, please exit survey] <small>[End Survey]</small></label><label><input type="radio" name="w">I'm not sure</label><a href="#">reset</a></div></div></field-card>
<add-bar></add-bar>
<field-card section tools="pencil del"><h2>Section 1: Point of Contact Information</h2><div class="nw">First, we would like to collect workplace contact information. This information is to assist NIOSH in contacting your<br>workplace should you request additional information from NIOSH. Provision of your information listed below is</div></field-card>
</div></div>
<aside><tip-card class="t1" label="Learn how to use..."><div class="bd"><span class="g">${I('bolt')}Smart Variables</span><span class="v1">${I('pencil')}Piping</span></div><div class="bd"><span class="r">@ Action Tags</span><span class="y">${I('arrows')}Field Embedding</span></div><div class="bd"><span class="bl">${I('root')}Special Functions</span></div></tip-card>
<tip-card label="How to embed a field elsewhere">Learn how to embed a field on an instrument or survey by using <u>Field Embedding</u>.</tip-card>
<tip-card label="How to modify multiple fields together">To copy, move, or delete multiple fields at the same time, hold the Ctrl, Shift, or Cmd key on your keyboard and click the fields to reveal the options.</tip-card></aside></div>`);

define('edge-window',`:host{display:flex;flex-direction:column;flex:1;min-height:0;background:#f7f7f7}
.body{flex:1;min-height:0;display:flex;margin-bottom:3px}
.view{flex:1;display:flex;margin-left:3px;border-radius:6px;overflow:hidden;background:#fff;box-shadow:0 0 2px #bbb;min-width:0}
.sb{width:15px;padding:6px 0;display:flex;flex-direction:column;align-items:center;gap:4px;color:#888;--size:7px}.sb i{width:6px;height:37px;border-radius:3px;background:#8a8a8a}
.side{width:33px;display:flex;justify-content:center;--size:9px;padding-top:3px;color:#333}`,
`<browser-tabs></browser-tabs><browser-toolbar></browser-toolbar><favorites-bar></favorites-bar>
<div class="body"><div class="view"><redcap-menu></redcap-menu><redcap-page></redcap-page><div class="sb">${I('tri')}<i></i></div></div><div class="side">${I('plus')}</div></div>`);

/* ---------- floor plan ---------- */
const walls=`M297,335V198H1133 M1227,198H1605V332H1362 M1265,198V332H1325 M1475,198V332 M25,333H166 M27,333V1151H606 M27,459H155 M210,333H384 M228,333V400 M294,333V400 M373,333V397H384 M406,333H638 M416,333V397H406
M640,198V940 M825,198V664H898V674 M898,716V724H825V794H816V847H825V940 M562,400H638 M562,467H638 M562,535H638 M562,603H638 M562,671H638 M562,739H638 M562,806H638 M562,875H638 M562,875V940H610 M628,940H1137L1147,930 M1160,915L1173,905V603H1144 M843,603H1100
M27,732H155V815 M155,862V944H27 M625,1151H646V1012 M551,1012H710 M730,1012H972V1080 M650,1012V1146H858V1151H985 M972,1125V1146 M1004,1097V1012H1153 M1176,1012H1265V1148 M1265,1010H1347 M1396,1010H1473V1148 M1336,1008V966H1358 M1392,966H1406V1008
M1000,1150H1138 M1176,1150H2274 M2292,1152H2506 M851,1152V1427H1387 M880,1152V1290 M851,1290H952V1300 M851,1341H890 M920,1341H952V1320 M880,1220H970 M970,1152V1165 M970,1195V1245 M970,1265V1290 M1004,1155V1200 M1004,1220V1290H1072 M1096,1152V1290 M1093,1290H1178 M1195,1290H1349 M1366,1290H1425V1362
M1290,1152V1195L1302,1205 M1384,1220H1318V1290 M1387,1152V1290 M1387,1327V1427 M990,1327H1044 M1060,1327H1136 M1152,1327H1287V1345H1310V1423 M1000,1330V1423 M1105,1423V1347H1127V1330 M1327,1347H1384
M1265,433V490 M1265,442H1397V603H1265 M1265,553H1327 M1327,580V603 M1265,515V630 M1265,652V877H1295 M1310,877H1447 M1265,735H1447 M1441,735V877 M1398,527H1413 M1443,527H1475 M1396,333V365 
M1475,490V885 M1475,470H1793 M1475,875H1582 M1475,970V1145 M1475,1045H1487 M1508,1045H1627V1147
M1764,470V550 M1764,590V747 M1864,470H2571V573H2512 M2014,470V770 M1764,603H2016 M1764,621H2014 M1893,621V770 M1921,770V698H2014 M1762,770H2208 M2209,470V560 M2163,603H2383 M2163,603V770 M2229,770H2368 M2359,603V645 M2359,698V770 M2424,603H2511 M2470,500V600 M2512,470V692 M2512,730V830 M2453,770H2511
M2510,853V968 M2510,883H2810V1248 M2810,1268V1301H2507V1152 M2510,988V1010 M2513,940H2601 M2620,940H2684 M2684,885V967 M2684,987V1125 M2684,1112H2804 M2510,1010H2642V1030 M2598,1010V1080 M2598,1045H2642V1060 M2513,1080H2642 M2615,1080V1120H2642 M2513,1160H2642V1190 M2684,1155H2695V1187 M2680,1188H2804 M2718,1190V1292 M2635,1220H2647 M2670,1220H2718 M2632,1217V1295 M2510,1020V1152 M2325,1095V1046H2478 M2325,1115V1150 M2427,1046V1150`;
const thin=`M1455,1152V1330H1492V1397H1506V1450H1391V1427 M1496,1397V1450 M1501,1397V1450 M1236,235V358H1369V335 M1236,235H1262V333 M710,1003L732,1014 M606,1162L625,1151 M618,950L632,939 M990,608H1075 M990,608V648 M1028,608V660H1048V628H1075 M1075,608V648 M827,753H845 M845,728H896V757H845V728 M1005,1122H1021V1145H1005V1122 M953,1290L940,1310 M957,1327L968,1340 M977,1340L990,1327 M1350,1290L1362,1278 M1153,1012L1165,1002 M1176,1290L1166,1278 M1072,1290L1082,1278 M1425,1362L1407,1350 M1390,1300L1400,1312 M1044,1338L1062,1327 M958,1187L970,1177 M958,1257L970,1245 M992,1212L1004,1200 M1447,720L1472,735 M1250,636L1264,652 M1250,500L1264,488 M1250,515L1262,527 M1455,887L1472,873 M1290,873L1305,887 M1413,525L1428,511 M1443,511L1457,527 M1764,770L1780,756 M2209,582L2227,570 M2212,756L2229,771 M2320,1112L2312,1100 M2478,1046L2490,1058 M2500,1020L2522,1033 M2497,976L2511,988 M2511,853L2523,842 M2280,1163L2293,1152 M2601,940L2620,930 M2625,1020L2642,1030 M2625,1110L2642,1122 M2620,1175L2635,1187 M2670,1167L2685,1155 M2670,1167L2684,1183 M2650,1220L2664,1232 M2810,1248L2822,1260 M2632,1217L2645,1205 M1764,709H1890 M1860,770V741H1890 M1489,1045L1500,1030 M1240,445H1257V478H1240V445 M1231,548H1257V605H1231V548 M1270,617H1316V641H1270V617 M497,338H530V375H497V338 M497,357H530`;
const boxes=[[871,223,1037,336,'#536',950,273,14,'MAZ|HCN-4000',952,304],[875,381,1033,437,'#535',950,403,14,'MAZ|HCN-4000',950,419],[1092,307,1153,452,'#540',1124,370,14,'MAZ|HCN-4000',1127,398],[867,484,921,567,'#537',892,519,14,'MAT|MX-520',894,550],[949,484,1004,567,'#538',974,517,14,'MAT|MX-520',977,552],[1028,501,1102,565,'#539',1063,525,14,'MAT|VX-1000',1066,549],
[228,704,317,764,'#546',269,725,14,'OKAMOTO|ACC16.24CA1Q',274,745],[337,717,425,765,'#329',369,748,14],[442,710,521,764,'#327',476,745,14],[232,844,337,920,'#543',285,873,14,'OKAMOTO|ACC24.40CA1Q',287,893],[341,841,408,888,'#529',373,870,14],[442,839,521,893,'#328',476,872,14],
[103,475,150,488,'#463',124,486,9],[46,587,74,653,'#464',62,626,9],[37,672,66,706,'#345',52,696,11],[120,681,156,706,'#347',139,698,10],[37,752,77,805,'#352',56,782,9],[81,888,145,936,'#354',111,917,9],[125,754,145,787,'#325',139,775,8,'','','',1],[264,351,280,386,'#322',279,372,8,'','','',1],
[587,364,622,385,'#343',604,380,10],[587,431,622,452,'#324',604,446,10],[587,500,622,521,'#308',604,515,10],[587,574,629,592,'#420',605,587,9],[587,636,622,657,'#309',604,651,10],[587,703,622,724,'#306',604,718,10],[587,771,622,792,'#341',604,786,10],[587,841,622,862,'#326',604,856,10],
[449,517,494,588,'#323',478,555,9,'','','',1],[501,557,526,588],[235,1009,256,1031],[588,1036,616,1076],[288,1043,436,1123,'#541',358,1077,14,'MAK|DA300',361,1096],[474,1046,537,1123,'#542',503,1083,14,'MAK|V33i',503,1101],
[1498,524,1547,584,'#128',1520,560,14,'MITSU|MV1200R',1522,581],[1492,611,1540,671,'#126',1516,631,14,'MITSU|MV1200R',1514,653],[1492,699,1553,761,'#527',1519,730,14,'MITSU|FA20SADV',1520,760],[1563,616,1618,668,'#166',1587,637,14,'MITSU|EA-12',1588,667],[1635,614,1700,680,'#127',1664,636,14,'MITSU|MV2400S',1667,660],[1594,489,1657,553,'#130',1620,516,14,'MITSU|MV2400R',1626,552],[1674,487,1738,553,'#129',1701,508,14,'MITSU|MV2400R',1705,551],[1533,484,1571,507,'Hole Popper',1550,499,6],
[1501,814,1569,849,'#133',1516,837,13],[1615,745,1683,783,'#131',1665,773,13],[1490,801,1574,813],[1609,783,1693,795],
[1907,835,1985,991,'#533',1944,920,14,'MAZ|Variaxis|i-600',1948,955],[2002,847,2080,965,'#534',2045,906,14,'MAZ|Variaxis|i-600',2042,933],[2103,854,2162,945,'#121',2130,892,13,'MAZ|Variaxis|630-5S',2132,917],[2202,851,2276,965,'#525',2241,916,14,'MAZ|Variaxis|630-5XII',2241,937],[2326,859,2379,981,'#523',2353,927,14,'MAZ|HCN-4000II',2354,977],[2401,931,2476,1020,'#112',2437,982,13,'MAZ|FH-480',2441,1003],
[2055,600,2091,682,'#531',2073,647,9,'MAZ|VCC5X12K',2073,679],[2124,598,2154,638,'#165',2140,624,9,'KITAMURA',2131,648],[2044,705,2082,772,'#530',2060,745,9,'MAZ|VCC5X12K',2064,769],[2120,692,2157,772,'#532',2136,733,9,'MAZ|VCC5X12K',2140,769],[2255,498,2362,568,'#527',2305,535,15],
[2379,477,2418,491],[2424,476,2442,506],[2441,567,2466,601],[2466,744,2490,765],[1539,695,1554,708]];
const bench=[484,531,548,594,610,657,674].map(y=>[227,y,270,y+16]);
const polys=`M322,455H344V444H360V480H344V468H322V455 M303,496H322V487V504H340V513H322V521H303V496 M322,521H344V511H360V548H344V538H322V521 M303,548H318V560H340V573H318V585H303V548 M322,600H344V589H360V625H344V613H322V600 M303,621H318V634H340V646H318V658H303V621 M322,670H344V660H360V696H344V686H322V670 M459,622H481V612H496V648H481V636H459V622 M462,643H477V655H499V668H477V680H462V643
M68,975H92V955H109V1050H68V975 M159,970H205V1028H174V1050H159V970 M72,1079H137V1106H105V1127H92V1106H72V1079 M189,1079H226V1086H252V1097H226V1127H189V1079
M1532,962H1568V944H1593V1023H1532V962 M1669,881H1739V930H1763V947H1669V881 M1806,897H1872V948H1782V932H1806V897 M1669,1045H1731V1079H1726V1092H1738V1104H1718V1107H1676V1079H1669V1045 M1773,1043H1855V1061H1842V1123H1773V1043 M1891,1043H1975V1061H1957V1123H1891V1043 M2089,1058H2170V1114H2108V1075H2089V1058 M2198,1060H2261V1111H2178V1094H2198V1060 M247,444H265V484H247V444 M265,444H283V484H265V444 M1482,480L1502,476L1514,503L1495,510L1482,485`;
const hatch='M46,507H70V564H46V507 M109,638H156V652H109V638 M2052,480H2114V548H2052V480 M2132,480H2185V524H2132V480 M1987,1058H2081V1074H2067V1109H1987V1058';
const names=[['CLEANROOM',461,280,14],['CLEANROOM',747,697,14],['FINISHING',102,405,13],['LATHE',137,576,15],['JIG GRIND',81,849,13],['TOOLROOM',428,505,14],['GRINDING',388,814,14],['NC MILLING',429,1035,14],['NC MILLING',957,368,18],['Assembly',982,771,19],['Shipping',1360,284,19],['Clean Zone',1328,520,13],['Furnace',1355,636,12],['Ultrasonic',994,658,8],['Laser|Marker',870,740,8],['OPERATIONS',597,913,7],['ENGINEERING',812,1084,14],['PROGRAMMING',1131,1082,14],['QC LAB',1368,1090,14],['QUALITY',1554,1102,14],['TOOL CRIB',2260,693,15],['OFFICE',2380,1107,15],['NC MILLING',2114,592,17],['Packaging|Rack',1234,279,8],['Shrink|Wrap',1236,345,8],['Packaging|Rack',1313,345,8],['Computer',1227,463,8],['OSV|Rack',1243,570,8],['SAW',606,571,9],
['#410',337,467,10],['#405',319,508,10],['#433',338,535,10],['#418',321,573,10],['#408',338,611,10],['#415',321,645,10],['#411',476,637,10],['#412',481,667,9],['#161',88,1018,13],['#158',183,1009,13],['#163',104,1100,13],['#162',208,1109,12],['#465',59,541,9],['#462',132,650,9],['#528',1560,980,14],['MAK|EDAF3',1562,1002,9],['#164',1703,905,14],['MAZ|VTC-200B',1707,927,9],['#100',1836,917,14],['MAT|VX-1000',1836,933,9],['MAT|VX-1000',1698,1055,9],['#169',1698,1092,13],['MAK|PS105',1811,1056,9],['#109',1809,1092,14],['MAK|PS105',1928,1056,9],['#110',1926,1092,14],['HURCO|VMX50',2030,1044,9],['#104',2026,1091,13],['MAZ|Variaxis|500-5XII',2148,1056,9],['#168',2138,1105,13],['MAZ|FJV-25',2232,1069,9],['#111',2228,1105,13],['#103',2078,518,9],['#101',2154,508,9],['MITSUI-SEIKI|VS3A',2083,560,9],['HURCO|BMC-20',2160,536,9]];
const stars=[[841,338],[90,421],[309,478],[521,459],[105,574],[388,627],[535,682],[193,725],[295,829],[105,834],[551,882],[305,977],[509,1028],[135,1071],[1058,484],[967,707],[1197,772],[885,1004],[1301,1005],[1524,326],[1578,626],[1592,786],[1996,839],[1783,1028],[2189,1028],[2312,677],[2377,851]];
const exits=[[1410,420],[1430,493],[614,1213],[1440,1406],[2563,850],[2290,1218],[2776,1354]];
const round=v=>Math.round(v*10)/10;
function drawPlan(p,small){
  const X=x=>round((x/1.568+63)*p.sx+p.tx),Y=y=>round((y/1.425-9)*p.sy+p.ty);
  const path=d=>{let cx=0,cy=0;return d.replace(/([MLHV])(\d+)(?:,(\d+))?/g,(m,c,a,b)=>{a=+a;if(c==='H')cx=a;else if(c==='V')cy=a;else{cx=a;cy=+b;}return(c==='M'?'M':'L')+X(cx)+' '+Y(cy);});};
  const rect=b=>`M${b[0]},${b[1]}H${b[2]}V${b[3]}H${b[0]}V${b[1]}`;
  const txt=(s,x,y,z,rot)=>s.split('|').map((l,i)=>{const px=X(x),py=round(Y(y)+i*z*1.05);return`<text x="${px}" y="${py}" font-size="${z}"${rot?` transform="rotate(-90 ${px} ${py})"`:''}>${l}</text>`;}).join('');
  const cols=[[224,467],[224,739],[224,875],[224,1011],[432,467],[432,603],[432,739],[432,875],[432,1011],[1054,331],[1054,467],[1054,739],[1054,875],[1684,603],[1684,739],[1684,875],[1684,1011],[1892,875],[1892,1011],[2099,603],[2099,739],[2099,875],[2099,1011],[2306,739],[2306,875],[2306,1011]].map(c=>rect([c[0]-2,c[1]-3,c[0]+2,c[1]+3])).join('');
  let s=`<g fill="none" stroke="#222" stroke-width="${small?2:1.200}">`;
  s+=small?`<path d="${path(walls)}" stroke="#555" stroke-width="3"/>`:`<path d="${path(walls)}" stroke-width="4.200"/><path d="${path(walls)}" stroke="#fff" stroke-width="2"/>`;
  s+=`<path d="${path(thin+boxes.concat(bench).map(rect).join('')+polys+cols)}"${small?' stroke="#888"':''}/>`;
  if(!small)s+=`<path stroke-width="3" stroke-dasharray="7 2" d="${path(bench.map(b=>`M${b[0]+3},${b[1]+9}H${b[2]-4}`).join('')+'M256,450V478M274,450V478M1537,490H1566M2383,484H2414M2432,480V502M2445,585H2462')}"/>`;
  s+=`<path d="${path(hatch)}" fill="url(#h)"/></g><g font-family="Liberation Sans, Arial, sans-serif" text-anchor="middle" fill="#333">`;
  boxes.forEach(b=>{if(b[4])s+=txt(b[4],b[5],b[6],b[7],b[11]);if(b[8])s+=txt(b[8],b[9],b[10],9);});
  names.forEach(n=>s+=txt(...n));
  s+='</g>';
  if(p.stars)s+=stars.map(c=>{let a='';for(let i=0;i<10;i++){const r=i%2?4.500:12,t=-Math.PI/2+i*Math.PI/5;a+=`${round(X(c[0])+r*Math.cos(t))},${round(Y(c[1])+r*Math.sin(t))} `;}return`<polygon points="${a}" fill="#0070c0"/>`;}).join('');
  s+=`<g font-family="Liberation Sans, Arial, sans-serif" text-anchor="middle" fill="#e8192c" font-size="${p.ex}">${exits.map(e=>`<text x="${X(e[0])}" y="${Y(e[1])}">Exit</text>`).join('')}</g>`;
  return s;
}
/* marks on the two sampling slides, on the thumbnail grid */
function marks(dx,dy,nine){
  const X=x=>round((x+dx-97)*1.468),Y=y=>round((y+dy-20)*2.52);
  const R=(x1,y1,x2,y2,c,o='.6')=>`<rect x="${X(x1)}" y="${Y(y1)}" width="${round((x2-x1)*1.468)}" height="${round((y2-y1)*2.52)}" fill="${c}" opacity="${o}"/>`;
  const green='#70c133',yel='#f6cf1d',red='#ea4156',or='#f0802a';
  let s=R(502,76,650,178,green,'.65')+R(382,111,421,248,yel)+R(246,206,290,258,or,'.7')+R(290,206,372,258,red,'.7')+R(163,267,380,318,green,'.65')+R(777,236,1210,319,green,'.65')+R(1004,146,1085,178,green,'.75')+R(1004,178,1062,222,green,'.75');
  if(nine)s+=[[278,77,421,111],[163,111,382,211],[163,211,248,266],[421,77,507,266],[685,78,774,115],[1061,181,1151,222]].map(r=>R(...r,'#fff36b','.5')+`<rect x="${X(r[0])}" y="${Y(r[1])}" width="${round((r[2]-r[0])*1.468)}" height="${round((r[3]-r[1])*2.52)}" fill="none" stroke="#f0e62a" stroke-width="5"/>`).join('');
  const E=(x,y,rx)=>`<ellipse cx="${X(x)}" cy="${Y(y)}" rx="${rx}" ry="${rx*.75}" fill="none" stroke="#f01010" stroke-width="6"/>`;
  s+=E(557,96,43)+E(557,130,43)+[[625,114],[528,161],[565,161],[605,160],[269,216],[269,250],[297,299],[364,299],[923,258],[976,258],[1012,257],[1181,272],[869,303],[434,417]].map(e=>E(...e,29)).join('');
  const B=(x,y)=>{let a='';for(let i=0;i<20;i++){const r=i%2?10:20,t=i*Math.PI/10;a+=`${round(X(x)+r*Math.cos(t))},${round(Y(y)+r*Math.sin(t))} `;}return`<polygon points="${a}" fill="#2f5eae"/>`;};
  s+=(nine?[]:[[596,119],[251,232],[337,231],[328,278],[209,293],[858,278],[930,281],[1023,282],[1117,284],[1040,201]]).concat([[650,422]],[[nine?973:967,nine?86:97]]).map(b=>B(...b)).join('');
  const V=(x,y,w)=>`<rect x="${X(x)}" y="${Y(y)}" width="${w}" height="36" rx="8" fill="none" stroke="#18a8e8" stroke-width="6"/>`;
  s+=V(773,83,73)+V(564,183,74)+V(832,414,74);
  const T=(t,x,y,z,c,w=400)=>`<text x="${X(x)}" y="${Y(y)}" font-size="${z}" fill="${c}" font-weight="${w}">${t}</text>`;
  s+=[['Surface grinders',yel,359],['Wet grinders - enclosed',or,377],['Wet grinders - non enclosed',red,396],['CNC machines - all enclosed',green,413]].map(l=>R(151,l[2]-7,182,l[2]+6,l[1],'.7')+T(l[0],192,l[2]+3,20,'#333')).join('');
  s+=T('Mist collectors',465,426,31,'#222')+T('Area Sample',669,426,31,'#222')+T('Vapor Degreaser',902,427,31,'#222');
  const ay=nine?-10:0;s+=T('Area #1 (Major air intake)',989,105+ay,30,'#1c6fc0')+T('Area #2 (potential)',989,121+ay,30,'#1c6fc0');
  s+=T(nine?'1-Bromopropane, IPA, and VOCs':'MWF and Metals',159,55,31,'#c00000',700)+T('Confidential Document',1002,66,43,'#f00000');
  if(!nine)s+=T('#3',608,92,32,'#c00000',700)+T('#2',310,207,32,'#c00000',700)+T('#1',268,281,32,'#c00000',700)+T('#4',967,163,32,'#c00000',700)+T('#5',787,266,32,'#c00000',700);
  return s;
}
function slideMarkup(kind,small){
  let s;
  if(kind==='11')s='<text x="148" y="190" font-size="84" fill="#222">VOCs</text>';
  else if(kind==='10')s=drawPlan({sx:1,sy:1,tx:0,ty:0,ex:32,stars:1},small)+`<text x="78" y="101" font-size="43" fill="#f00">Total VOCs</text><text x="1331" y="114" font-size="44" fill="#f00">Confidential Document</text>
<g fill="#111" font-size="22"><text x="82" y="891" font-size="24" text-decoration="underline">Total VOCs</text><text x="82" y="923">Time #1:</text><text x="82" y="952">Time #2:</text><text x="82" y="981">Time #3:</text></g><text x="82" y="1022" font-size="22" fill="#c00000">Please use a different color to record VOC concentrations each time.</text>`;
  else{const nine=kind==='9';s=drawPlan({sx:.973,sy:.9175,tx:nine?3:15.600,ty:21.700,ex:29},small)+marks(nine?-8:0,0,nine);}
  return`<svg viewBox="0 0 1922 1081" font-family="Lato, Calibri, sans-serif"><defs><pattern id="h" width="4" height="4" patternUnits="userSpaceOnUse"><rect width="4" height="4" fill="#aaa"/><path d="M0 4L4 0" stroke="#222"/></pattern></defs>${s}</svg>`;
}
define('slide-view',':host{background:#fff;border:1px solid #c4c4c4;overflow:hidden;aspect-ratio:1922/1081}svg{display:block;width:100%;height:100%}',el=>slideMarkup(el.getAttribute('slide'),el.hasAttribute('small')));

/* ---------- PowerPoint ---------- */
define('ppt-title',`:host{display:flex;align-items:center;height:26px;background:#b7472a;color:#fbd3c4;font-size:8px;white-space:nowrap;--size:11px}
.a{display:flex;align-items:center;gap:13px;padding-left:15px;width:418px}.a span{margin-right:-8px}.tg{width:28px;height:12px;border:1px solid #fff;border-radius:6px;color:#fff;font-size:7px;line-height:10px;padding:0 4px;background:none;display:flex;justify-content:space-between;align-items:center;margin-right:-4px}.tg:before{content:"";width:5px;height:5px;border-radius:50%;background:#fff}
.t{display:flex;align-items:center;gap:4px;width:476px}.t .k,.a .k{--size:6px}.a .k{margin:0 -8px}
.s{display:flex;align-items:center;gap:10px;width:273px;height:17px;background:#fdc9b5;color:#a23c22;padding:0 10px}.s input{border:0;background:none;padding:0;width:200px;outline:0}.s input::placeholder{color:#a23c22}
.u{margin-left:auto;display:flex;align-items:center;gap:8px;padding-right:11px}.u span{font-size:9px}.u button{border:0;background:none;padding:0;display:flex;margin-left:15px}`,
`<div class="a"><span>AutoSave</span><button class="tg" aria-label="AutoSave">Off</button>${I('save')}${I('undo')}${I('caret','k')}${I('redo')}${I('present')}${I('touch')}${I('caret','k')}${I('qat','k')}</div>
<div class="t">HHE 2024 IH sampling_03182024 ${I('shield')} Public • Saved to \\\\cdc\\project ${I('caret','k')}</div>
<div class="s">${I('search')}<input placeholder="Search" aria-label="Search"></div>
<div class="u"><span>Lee, Eun Gyung (Emily) (CDC/NIOSH/RHD/FSB)</span><user-photo></user-photo><button aria-label="Ribbon display">${I('ribbonup')}</button><button aria-label="Minimize">${I('minus')}</button><button aria-label="Restore">${I('restore')}</button><button aria-label="Close">${I('close')}</button></div>`);
define('ppt-tabs',`:host{display:flex;align-items:center;height:23px;padding:0 9px 0 12px;gap:16px;font-size:9px;color:#444;--size:10px}a{white-space:nowrap;line-height:16px;border-bottom:2px solid transparent}.on{font-weight:600;border-color:#b7472a}
.r{margin-left:auto;display:flex;gap:6px;color:#b7472a;font-weight:600}.r button{display:flex;align-items:center;gap:3px;height:18px;padding:0 6px;border:1px solid #ddd;border-radius:2px;background:#fff}`,
 'File,Home,Insert,Draw,Design,Transitions,Animations,Slide Show,Record,Review,View,Help,EndNote 21,Acrobat'.split(',').map((t,i)=>`<a href="#"${i===1?' class="on"':''}>${t}</a>`).join('')+`<div class="r"><button aria-label="Comments">${I('chat')}</button><button>${I('rec')}Record</button><button>${I('shareout')}Share</button></div>`);
define('ribbon-group',`:host{display:flex;flex-direction:column;border-right:1px solid var(--line,#c8c6c4);position:relative;padding:0 4px;flex:none;color:#444}:host([open]){--line:transparent}
.c{flex:1;display:flex;gap:5px}footer{display:flex;height:10px;line-height:10px;font-size:7px}footer span{flex:1;text-align:center}footer ui-icon{--size:6px;margin-top:2px}`,
 el=>`<div class="c"><slot></slot></div><footer><span>${el.getAttribute('label')}</span>${el.hasAttribute('launch')?I('launcher'):''}</footer>`);
const big=(i,a,b='',c='')=>`<button class="big ${c}">${I(i)}<span>${a}${b?'<br>'+b:''}</span></button>`;
const it=(i,t,k,c='')=>`<button class="it ${c}">${I(i)}${t}${k?I('caret','k'):''}</button>`;
define('ppt-ribbon',`:host{display:flex;height:70px;padding:2px 0 3px;font-size:8px;border-bottom:1px solid #cfcdcb}
button{border:0;background:none;padding:0;white-space:nowrap;text-align:center}.big{display:flex;flex-direction:column;align-items:center;gap:3px;padding-top:2px;line-height:12px;--size:22px;min-width:20px}
.wide .big,ribbon-group[style] > .big:only-child{margin:0 auto}
.col{display:flex;flex-direction:column}.it{display:flex;align-items:center;gap:2px;height:18px;--size:11px}.k{--size:5px;margin-left:1px}.dim{color:#b0aeac}
.font{display:flex;flex-direction:column;gap:13px;padding:6px 0 0 4px;color:#a8a6a4}.font div{display:flex;gap:7px;align-items:center;height:17px}select{height:17px;border:1px solid #ccc;background:#e2e1e0;color:#b0aeac;font-size:8px;width:112px}select+select{width:34px;margin-left:-6px}
.font b,.font i,.font u,.font s,.font span{font-size:10px}.par{display:grid;grid-template-columns:repeat(6,12px);gap:14px 7px;padding:7px 0 0 4px;color:#aaa;--size:11px;align-content:start}
.shapes{width:99px;height:46px;border:1px solid #ccc;background:#fff;display:block;margin-top:1px}.up{margin-left:auto;align-self:flex-end;--size:8px;padding:0 8px}`,
`<ribbon-group label="Clipboard" launch style="width:121px">${big('paste','Paste','⌄')}<div class="col dim">${it('cut','Cut')}${it('copyg','Copy',1)}${it('brush','Format Painter')}</div></ribbon-group>
<ribbon-group label="Slides" open style="width:98px">${big('newslide','New','Slide⌄')}<div class="col">${it('layout','Layout',1)}${it('reset','Reset')}${it('section','Section',1)}</div></ribbon-group>
<ribbon-group label="Font" launch style="width:224px"><div class="font"><div><select aria-label="Font" disabled><option></option></select><select aria-label="Font size" disabled><option>12+</option></select><span>A^</span><span>Aˇ</span><span>A⌫</span></div><div><b>B</b><i>I</i><u>U</u><b>S</b><s>ab</s><span>AV</span><span>Aa</span>${I('pen')}<u>A</u></div></div></ribbon-group>
<ribbon-group label="Paragraph" launch open style="width:252px"><div class="par">${I('bullets')}${I('bullets')}${I('indent')}${I('indent')}${I('spacing')}<span></span>${I('lines')}${I('lines')}${I('lines')}${I('lines')}${I('align')}${I('cols')}</div><div class="col dim">${it('textdir','Text Direction',1)}${it('align','Align Text',1)}${it('smart','Convert to SmartArt',1)}</div></ribbon-group>
<ribbon-group label="Drawing" launch style="width:265px"><svg class="shapes" viewBox="0 0 99 46" fill="none" stroke="#444"><path d="M8 4l1 4 4 0-3 3 1 4-3-2-3 2 1-4-3-3 4 0zM45 4l8 11M58 4l8 11M74 4h11v10H74zM8 20a4 4 0 1 0 .1 0M18 20h9v9h-9zM36 20l-5 10h10zM44 20h5v9h5M58 20h5v9h5M72 23h6v-3l5 5-5 5v-3h-6zM7 32v6H4l4 5 4-5H9v-6M18 33h8v4h-8v6h9M31 34q8 0 3 4t3 5M44 34q7 0 8 8M58 42q2-10 8 0M78 33q-4 0-3 3t-3 2q3 0 2 3t3 2"/><path d="M17 4h9v10h-9zM30 4h9v10h-9z" stroke="#2a8ad0" stroke-width="1.500"/><path d="M87 0v46M87 15h12M87 30h12M90 9l3-3 3 3M90 21l3 3 3-3M90 35h6M90 39l3 3 3-3" stroke="#888"/></svg>${big('arrange','Arrange','⌄')}${big('quick','Quick','Styles⌄','dim')}<div class="col dim">${it('bucket','Shape Fill',1)}${it('pen','Shape Outline',1)}${it('fx','Shape Effects',1)}</div></ribbon-group>
<ribbon-group label="Editing" style="width:77px"><div class="col">${it('search','Find')}${it('replace','Replace',1)}${it('cursor','Select',1)}</div></ribbon-group>
<ribbon-group label="Adobe Acrobat" style="width:82px">${big('adobe','Create and Share','Adobe PDF')}</ribbon-group>
<ribbon-group label="Voice" style="width:44px">${big('mic','Dictate','⌄')}</ribbon-group>
<ribbon-group label="Sensitivity" style="width:54px">${big('sens','Sensitivity','⌄')}</ribbon-group>
<ribbon-group label="Designer" style="width:51px">${big('designer','Designer')}</ribbon-group><span class="up">${I('up')}</span>`);
define('slide-list',`:host{width:413px;flex:none;display:flex;border-right:1px solid #bdbdbd;overflow:hidden}
ol{margin:0;padding:9px 0 0;list-style:none;flex:1;display:flex;flex-direction:column;gap:16px;min-height:0;overflow:hidden}li{display:flex;gap:11px;font-size:12px;color:#555}li span{width:15px;text-align:right;flex:none}slide-view{width:359px;flex:none}
.on{color:#c8502f}.on slide-view{outline:2px solid #b7472a}`,
`<ol>${['8','9','10','11'].map(n=>`<li${n==='10'?' class="on"':''}><span>${n}</span><slide-view small slide="${n}"></slide-view></li>`).join('')}</ol><scroll-track></scroll-track>`);
define('scroll-track',`:host{width:11px;flex:none;display:flex;flex-direction:column;background:#f3f2f1;margin:1px 2px;--size:7px;color:#111}i{display:flex;justify-content:center;align-items:center;height:11px;border:1px solid #999;background:#fff}b{height:53px;border:1px solid #999;background:#fff;margin:120px 0 auto}`,
 el=>`<i>${I('tri')}</i><b></b><i>${I('trid')}</i>${el.hasAttribute('pages')?`<i>${I('prev')}</i><i>${I('next')}</i>`:''}`);
define('ppt-status',`:host{display:flex;align-items:center;height:16px;background:#f3f2f1;font-size:8px;color:#555;padding:0 10px 0 6px;gap:20px;--size:9px;white-space:nowrap}span{display:flex;align-items:center;gap:4px}.r{margin-left:auto;gap:22px}input{width:94px;height:2px;accent-color:#777}`,
 `<span>Slide 10 of 40</span>${I('spell')}<span>English (United States)</span><span>${I('access')}Accessibility: Investigate</span><span>${I('label')}Public</span><span class="r"><span>${I('notes')}Notes</span>${I('normal')}${I('sorter')}${I('book')}${I('present')}<input type="range" aria-label="Zoom"><span>119%</span>${I('fit')}</span>`);
define('ppt-window',`:host{display:flex;flex-direction:column;flex:1;min-height:0;background:#e6e6e6}.hd{background:#f3f2f1}
.m{flex:1;min-height:0;display:flex}.e{flex:1;display:flex;flex-direction:column;min-width:0}.s{flex:1;min-height:0;display:flex;justify-content:center;padding:11px 0 12px}.s slide-view{height:100%}
.n{border-top:1px solid #c8c8c8;padding:9px 12px 0;font-size:14px;line-height:15px;height:25px;color:#666}scroll-track[pages]{margin-bottom:28px}`,
`<div class="hd"><ppt-title></ppt-title><ppt-tabs></ppt-tabs><ppt-ribbon></ppt-ribbon></div><div class="m"><slide-list></slide-list><div class="e"><div class="s"><slide-view slide="10"></slide-view></div><div class="n">Click to add notes</div></div><scroll-track pages></scroll-track></div><ppt-status></ppt-status>`);

/* ---------- taskbar ---------- */
define('task-bar',`:host{display:flex;align-items:stretch;height:30px;flex:none;background:linear-gradient(90deg,#464646 78%,#2f3a42 82%);color:#fff;--size:17px}:host([second]){background:#2f3a42}
button{border:0;background:none;padding:0;display:flex;align-items:center;justify-content:center;width:37px;border-bottom:2px solid transparent;color:#fff;position:relative}.st{width:36px;background:#2b373d}
.on{border-color:#76b9ed}.cur{background:#6a6f71}.bdg{position:absolute;right:5px;bottom:2px;background:#d0153a;border-radius:50%;font-size:7px;line-height:11px;width:12px;height:11px}
.sr{display:flex;align-items:center;gap:9px;width:214px;background:#f2f2f2;border:1px solid #ccc;color:#333;padding-left:8px;--size:13px;margin-right:1px}.sr input{border:0;background:none;font-size:11px;padding:0;width:150px}.sr input::placeholder{color:#333}
.tr{margin-left:auto;display:flex;align-items:center;gap:14px;font-size:9px;line-height:13px;padding-right:15px;--size:11px}.tr time{text-align:center;font-size:8px}.sm{--size:14px}`,
 el=>{const two=el.hasAttribute('second');return `<button class="st" aria-label="Start">${I('start','sm')}</button>${two?`<button aria-label="Search">${I('search')}</button>`:`<label class="sr">${I('search')}<input placeholder="Type here to search"></label>`}<button aria-label="Task view">${I('taskview','sm')}</button>`+
 ['outlook','excel','explorer','word','ppt','edge','teams','acrobat'].map(n=>`<button aria-label="${n}" class="${n==='excel'?'':'on'}${n==='edge'?' cur':''}">${I(n)}${n==='teams'?'<span class="bdg">9+</span>':''}</button>`).join('')+
 `<div class="tr">${two?'':`<span>Desktop</span>${I('up')}${I('cloud')}${I('vol')}${I('monitor')}${I('penw')}<span>ENG</span>`}<time>1:15 PM<br>3/20/2024</time>${two?'':I('notify')}</div>`;});

define('dual-desktop',`:host{display:grid;grid-template-columns:1fr 1fr;height:100vh;overflow:hidden}section{display:flex;flex-direction:column;min-width:0;min-height:0}`,
 '<section><edge-window></edge-window><task-bar></task-bar></section><section><ppt-window></ppt-window><task-bar second></task-bar></section>');
</script>
</body>
</html>
